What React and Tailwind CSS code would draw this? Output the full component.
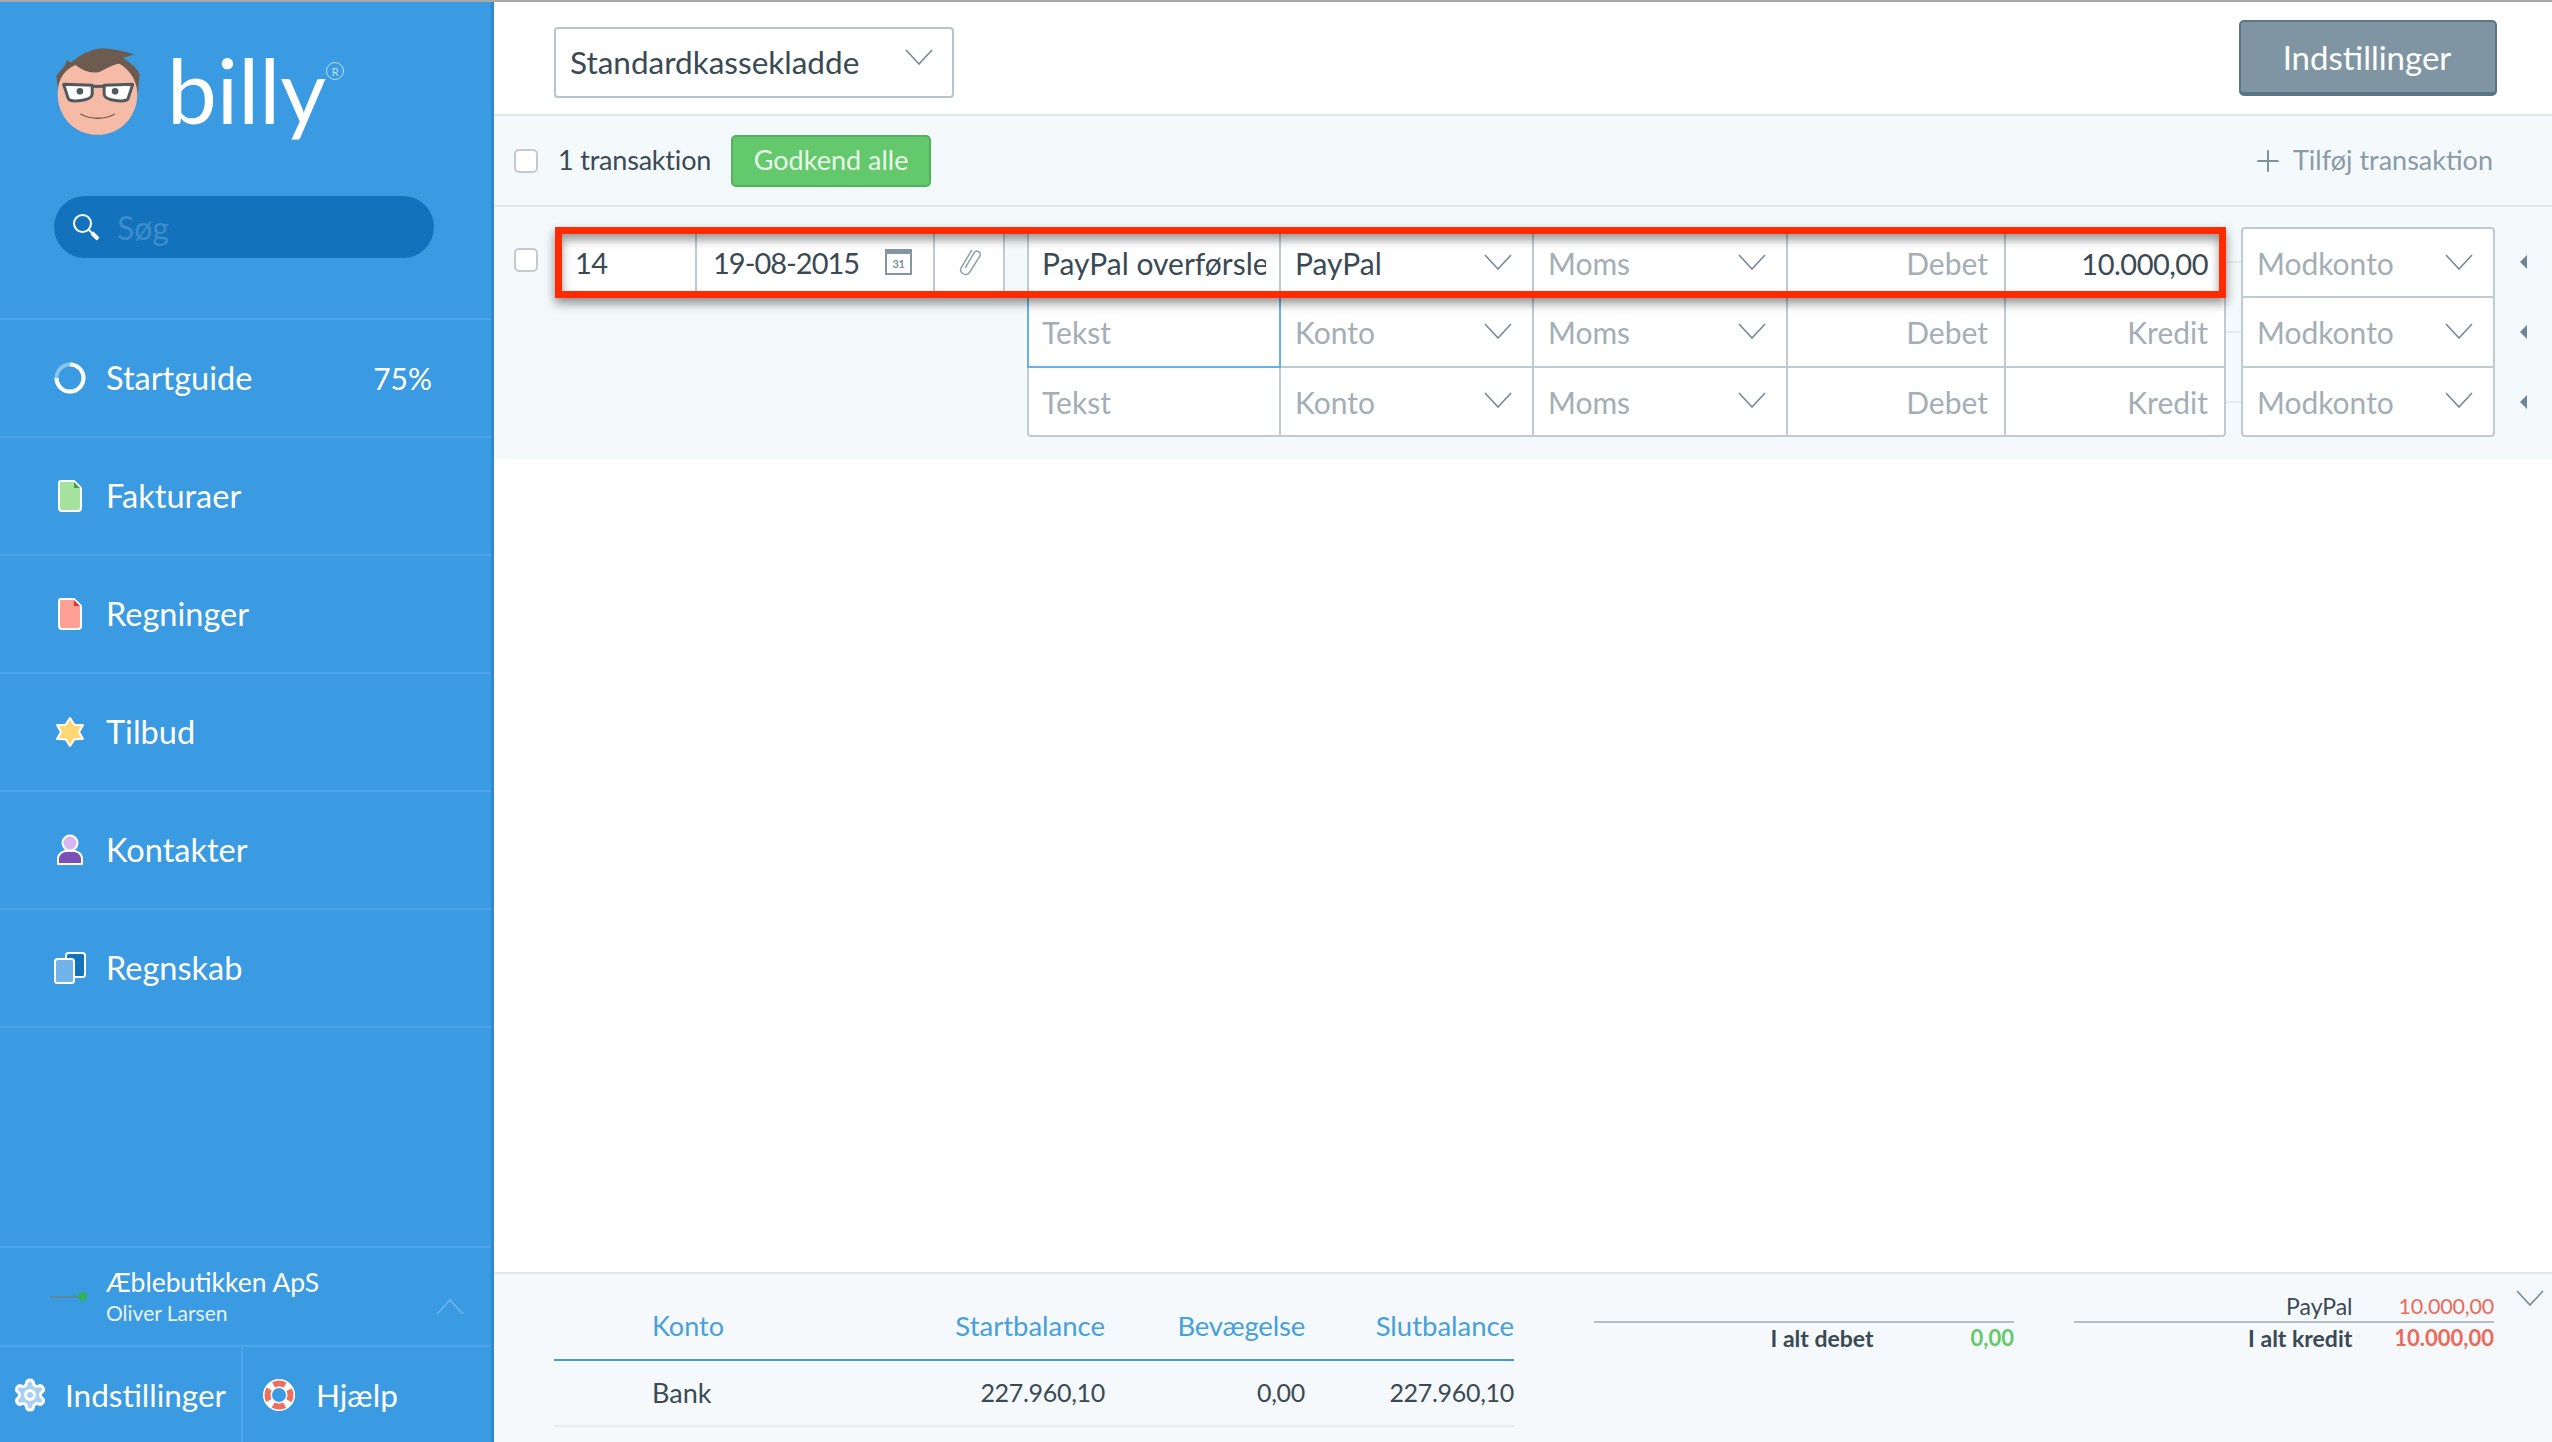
import { Settings, Plus } from 'lucide-react';

const ROW_LINE = 'border-[#bfcbd2]';
const NUMBER = 'text-[29px] tracking-[-0.5px]';

function Chevron({ up = false, color = '#75899a', className = '' }) {
  return (
    <svg viewBox="0 0 28 16" className={`w-[28px] h-[16px] ${className}`} fill="none">
      <polyline points={up ? '1,15 14,1 27,15' : '1,1 14,15 27,1'} stroke={color} strokeWidth="1.6" />
    </svg>
  );
}

function Face() {
  return (
    <svg viewBox="75 50 265 270" className="w-[88px] h-[90px] shrink-0">
      <path d="M82 135 L108 105 L114 88 L125 97 C150 75 190 52 225 54 C255 56 290 62 316 72 L284 82 C300 95 325 110 333 132 L326 200 L90 200 Z" fill="#6d5b4f" />
      <path d="M86 190 C86 145 110 115 140 104 C165 125 200 135 225 118 C240 110 262 100 272 100 C300 115 326 150 326 190 C326 260 275 314 206 314 C137 314 86 260 86 190 Z" fill="#f6bba6" />
      <path d="M104 162 L190 165 L190 192 C188 212 125 218 118 205 Z" fill="#fff" stroke="#50595c" strokeWidth="9" strokeLinejoin="round" />
      <path d="M312 162 L226 165 L226 192 C228 212 291 218 298 205 Z" fill="#fff" stroke="#50595c" strokeWidth="9" strokeLinejoin="round" />
      <path d="M188 168 L228 168" stroke="#50595c" strokeWidth="9" />
      <circle cx="153" cy="183" r="10" fill="#50595c" />
      <circle cx="259" cy="183" r="10" fill="#50595c" />
      <path d="M156 252 C185 268 228 268 257 252" fill="none" stroke="#6d5b4f" strokeWidth="4" strokeLinecap="round" />
    </svg>
  );
}

function ProgressRing() {
  return (
    <svg viewBox="0 0 32 32" className="w-[32px] h-[32px]" fill="none">
      <circle cx="16" cy="16" r="13.5" stroke="#8cc4ee" strokeWidth="4" />
      <path d="M16 2.5 A13.5 13.5 0 1 1 2.5 16" stroke="#fff" strokeWidth="4" />
    </svg>
  );
}

function DocIcon({ fill, fold }) {
  return (
    <svg viewBox="0 0 24 32" className="w-[24px] h-[32px]">
      <path d="M3 1 H16 L23 8 V28 Q23 31 20 31 H4 Q1 31 1 28 V3 Q1 1 3 1 Z" fill={fill} stroke="#fff" strokeWidth="2" />
      <path d="M16 2 L22 8 H16 Z" fill={fold} />
    </svg>
  );
}

function StarIcon() {
  return (
    <svg viewBox="0 0 30 32" className="w-[30px] h-[32px]">
      <path d="M15 2 L19.5 8.8 L28 9 L24 16 L28 23 L19.5 23.2 L15 30 L10.5 23.2 L2 23 L6 16 L2 9 L10.5 8.8 Z" fill="#ffd873" stroke="#fff" strokeWidth="2" strokeLinejoin="round" />
    </svg>
  );
}

function PersonIcon() {
  return (
    <svg viewBox="0 0 28 32" className="w-[28px] h-[32px]">
      <path d="M2 30 V25 Q2 19 9 17 H19 Q26 19 26 25 V30 Z" fill="#7b50b6" stroke="#fff" strokeWidth="2" strokeLinejoin="round" />
      <circle cx="14" cy="9" r="7.5" fill="#d6b6ee" stroke="#fff" strokeWidth="2" />
    </svg>
  );
}

function BooksIcon() {
  return (
    <svg viewBox="0 0 32 32" className="w-[32px] h-[32px]">
      <rect x="12" y="1" width="19" height="24" rx="2.5" fill="#1272bc" stroke="#fff" strokeWidth="2" />
      <rect x="1" y="7" width="19" height="24" rx="2.5" fill="#71b4ea" stroke="#fff" strokeWidth="2" />
    </svg>
  );
}

function SearchIcon() {
  return (
    <svg viewBox="0 0 28 28" className="w-[28px] h-[28px] shrink-0" fill="none">
      <circle cx="10.5" cy="10.5" r="8.5" stroke="#fff" strokeWidth="2" />
      <path d="M17 17 L26 26" stroke="#fff" strokeWidth="2" />
      <path d="M20 20 L26 26" stroke="#fff" strokeWidth="4" />
    </svg>
  );
}

function Lifebuoy() {
  return (
    <svg viewBox="0 0 32 32" className="w-[32px] h-[32px] shrink-0">
      <circle cx="16" cy="16" r="16" fill="#fff" />
      <circle cx="16" cy="16" r="11.5" fill="none" stroke="#ee6f5e" strokeWidth="6" strokeDasharray="12 6.06" strokeDashoffset="6" />
      <circle cx="16" cy="16" r="7" fill="#3a9ae2" />
    </svg>
  );
}

function PaperclipIcon() {
  return (
    <svg viewBox="0 0 26 28" className="w-[26px] h-[28px]" fill="none">
      <path d="M9.5 19.5 L18 5 C20 1.5 25.5 3.5 24 8 L13.5 24.5 C10.5 28.5 3 25.5 5 20 L15.5 2.5" stroke="#8fa2ae" strokeWidth="1.5" strokeLinecap="round" />
    </svg>
  );
}

function CalendarIcon() {
  return (
    <div className="w-[27px] h-[26px] border-2 border-t-[5px] border-[#8496a3] flex items-center justify-center text-[11px] leading-none text-[#7d909c] font-bold shrink-0">
      31
    </div>
  );
}

function Checkbox() {
  return <div className="w-[24px] h-[24px] rounded-[5px] border-2 border-[#c3c9cd] bg-white shrink-0" />;
}

function Select({ label, dark = false, width, last = false }) {
  return (
    <div className={`${width} h-full flex items-center justify-between pl-[14px] pr-[20px] ${last ? '' : `border-r-2 ${ROW_LINE}`} ${dark ? 'text-[#3a4a55]' : 'text-[#a3aeb5]'}`}>
      <span className="pt-[2px]">{label}</span>
      <Chevron className="-mt-[2px]" />
    </div>
  );
}

function AmountCell({ label, dark = false, width, last = false }) {
  return (
    <div className={`${width} h-full flex items-center justify-end pr-[16px] pt-[2px] ${last ? '' : `border-r-2 ${ROW_LINE}`} ${dark ? `text-[#3a4a55] ${NUMBER}` : 'text-[#a3aeb5]'}`}>
      {label}
    </div>
  );
}

const navItems = [
  { label: 'Fakturaer', icon: <DocIcon fill="#a5e29b" fold="#4c9a4c" /> },
  { label: 'Regninger', icon: <DocIcon fill="#ff9f95" fold="#d9362e" /> },
  { label: 'Tilbud', icon: <StarIcon /> },
  { label: 'Kontakter', icon: <PersonIcon /> },
  { label: 'Regnskab', icon: <BooksIcon /> },
];

function Sidebar() {
  return (
    <aside className="w-[494px] h-full shrink-0 bg-[#3a9ae2] border-r-[3px] border-[#3488cc] flex flex-col text-white">
      {/* Logo and search */}
      <div className="h-[318px] shrink-0 border-b-2 border-[#4ba5e8] pl-[54px]">
        <div className="flex items-start pt-[45px] h-[194px]">
          <Face />
          <span className="ml-[25px] -mt-[10px] text-[89px] leading-[106px] font-normal">billy</span>
          <span className="ml-[0px] mt-[15px] w-[18px] h-[18px] rounded-full border border-[#bfe0f8] text-[11px] leading-none text-[#bfe0f8] flex items-center justify-center">R</span>
        </div>
        <div className="w-[380px] h-[62px] rounded-full bg-[#1272bc] flex items-center pl-[18px] gap-[17px]">
          <SearchIcon />
          <span className="text-[32px] pt-[2px] text-[#3f8ccb]">Søg</span>
        </div>
      </div>

      {/* Nav */}
      <div className="h-[118px] shrink-0 border-b-2 border-[#4ba5e8] flex items-center text-[32.5px]">
        <div className="w-[106px] pl-[54px] flex"><ProgressRing /></div>
        <span className="flex-1">Startguide</span>
        <span className="pr-[59px] text-[30px]">75%</span>
      </div>
      {navItems.map((item) => (
        <div key={item.label} className="h-[118px] shrink-0 border-b-2 border-[#4ba5e8] flex items-center text-[32.5px]">
          <div className="w-[106px] pl-[54px] flex">
            <div className="w-[32px] flex justify-center">{item.icon}</div>
          </div>
          <span>{item.label}</span>
        </div>
      ))}

      <div className="flex-1" />

      {/* Company */}
      <div className="h-[99px] shrink-0 border-t-2 border-[#4ba5e8] flex items-center">
        <div className="w-[106px] pl-[50px] flex items-center">
          <div className="w-[28px] h-[2px] bg-[#5c8a9c]" />
          <div className="w-[9px] h-[9px] rounded-full bg-[#2fb35a]" />
        </div>
        <div className="flex-1 flex flex-col">
          <span className="text-[26.5px] leading-[34px] -mt-[2px]">Æblebutikken ApS</span>
          <span className="text-[21px] leading-[28px] text-[#e6f3fc]">Oliver Larsen</span>
        </div>
        <Chevron up color="#6db4ea" className="mr-[27px] mt-[20px] w-[26px]" />
      </div>

      {/* Bottom links */}
      <div className="h-[97px] shrink-0 border-t-2 border-[#4ba5e8] flex items-stretch text-[31.5px]">
        <div className="w-[243px] border-r-2 border-[#4ba5e8] flex items-center pl-[12px] gap-[17px]">
          <Settings size={36} strokeWidth={2} color="#fff" fill="#a9d0f0" className="shrink-0" />
          <span className="pt-[2px]">Indstillinger</span>
        </div>
        <div className="flex-1 flex items-center pl-[20px] gap-[21px]">
          <Lifebuoy />
          <span className="pt-[2px]">Hjælp</span>
        </div>
      </div>
    </aside>
  );
}

function TransactionRows() {
  const rows = [
    { text: 'PayPal overførsler', konto: 'PayPal', kredit: '10.000,00', filled: true },
    { text: 'Tekst', konto: 'Konto', kredit: 'Kredit', focus: true },
    { text: 'Tekst', konto: 'Konto', kredit: 'Kredit' },
  ];

  return (
    <div className="relative h-[252px] shrink-0 bg-[#f4f9fc] pt-[20px] pl-[20px] flex items-start text-[30px]">
      <div className="w-[41px] pt-[21px]"><Checkbox /></div>

      {/* Number, date, attachment */}
      <div className={`w-[450px] h-[70px] mr-[22px] bg-white flex text-[#3a4a55] shrink-0 ${NUMBER}`}>
        <div className={`w-[142px] flex items-center pl-[20px] pt-[2px] border-r-2 ${ROW_LINE}`}>14</div>
        <div className={`w-[238px] flex items-center justify-between pl-[16px] pr-[21px] border-r-2 ${ROW_LINE}`}>
          <span className="pt-[2px] tracking-[-1px]">19-08-2015</span>
          <CalendarIcon />
        </div>
        <div className={`flex-1 flex items-center justify-center border-r-2 ${ROW_LINE}`}>
          <PaperclipIcon />
        </div>
      </div>

      {/* Entry table */}
      <div className={`w-[1199px] h-[210px] shrink-0 bg-white border-2 ${ROW_LINE} rounded-[4px] flex flex-col`}>
        {rows.map((row, i) => (
          <div key={i} className={`flex-1 flex items-stretch ${i < 2 ? `border-b-2 ${ROW_LINE}` : ''}`}>
            <div className={`flex items-center pl-[13px] pr-[13px] whitespace-nowrap ${row.filled ? 'text-[#3a4a55]' : 'text-[#a3aeb5]'} ${row.focus ? 'w-[254px] border-2 border-t-0 border-[#6ab0e8] -mb-[2px] -ml-[2px]' : `w-[252px] border-r-2 ${ROW_LINE}`}`}>
              <span className="block w-full overflow-hidden pt-[2px]">{row.text}</span>
            </div>
            <Select label={row.konto} dark={row.filled} width="w-[253px]" />
            <Select label="Moms" width="w-[254px]" />
            <AmountCell label="Debet" width="w-[218px]" />
            <AmountCell label={row.kredit} dark={row.filled} width="flex-1" last />
          </div>
        ))}
      </div>

      {/* Connector lines */}
      <div className="w-[15px] h-[210px] shrink-0 flex flex-col">
        {rows.map((_, i) => (
          <div key={i} className="flex-1 flex items-center"><div className="w-full h-[2px] bg-[#e4ebef]" /></div>
        ))}
      </div>

      {/* Contra account */}
      <div className={`w-[254px] h-[210px] shrink-0 bg-white border-2 ${ROW_LINE} rounded-[4px] flex flex-col`}>
        {rows.map((_, i) => (
          <div key={i} className={`flex-1 flex items-center justify-between pl-[14px] pr-[20px] text-[#a3aeb5] ${i < 2 ? `border-b-2 ${ROW_LINE}` : ''}`}>
            <span className="pt-[2px]">Modkonto</span>
            <Chevron className="-mt-[2px]" />
          </div>
        ))}
      </div>

      {/* Row arrows */}
      <div className="h-[210px] pl-[25px] flex flex-col">
        {rows.map((_, i) => (
          <div key={i} className="flex-1 flex items-center">
            <div className="w-0 h-0 border-y-[7px] border-y-transparent border-r-[7px] border-r-[#6d8594]" />
          </div>
        ))}
      </div>

      {/* Red annotation around the first row */}
      <div className="absolute left-[61px] top-[20px] w-[1671px] h-[71px] border-[7px] border-[#ff2a00] shadow-[0_5px_10px_rgba(0,0,0,0.45),inset_0_6px_10px_rgba(0,0,0,0.4)] pointer-events-none" />
    </div>
  );
}

function Footer() {
  return (
    <div className="h-[170px] shrink-0 border-t-2 border-[#e3e6e8] bg-[#f6f9fb] flex items-start text-[#3a4a55]">
      {/* Balance table */}
      <div className="w-[960px] ml-[60px] shrink-0">
        <div className="grid grid-cols-[350px_201px_200px_209px] h-[87px] items-end pb-[15px] border-b-2 border-[#3f9bdc] text-[#46a0dc] text-[27.5px] leading-[36px]">
          <span className="pl-[98px] text-[27px]">Konto</span>
          <span className="text-right">Startbalance</span>
          <span className="text-right tracking-[-0.2px]">Bevægelse</span>
          <span className="text-right">Slutbalance</span>
        </div>
        <div className="grid grid-cols-[350px_201px_200px_209px] h-[66px] items-center border-b-2 border-[#e8edf0] text-[25px] tracking-[-0.3px]">
          <span className="pl-[98px] text-[27px] tracking-normal">Bank</span>
          <span className="text-right">227.960,10</span>
          <span className="text-right">0,00</span>
          <span className="text-right">227.960,10</span>
        </div>
      </div>

      {/* Debit total */}
      <div className="w-[420px] ml-[80px] mt-[47px] shrink-0 border-t-2 border-[#b2bec4] flex justify-end text-[23px] leading-[30px] font-bold">
        <span className="mr-[97px]">I alt debet</span>
        <span className="text-[22px] text-[#63c96b]">0,00</span>
      </div>

      {/* Credit total */}
      <div className="w-[420px] ml-[60px] mt-[18px] shrink-0 flex flex-col text-[23px]">
        <div className="flex justify-end pb-[1px] leading-[28px]">
          <span className="mr-[46px]">PayPal</span>
          <span className="text-[21.5px] text-[#ec6a5c] tracking-[-0.2px]">10.000,00</span>
        </div>
        <div className="border-t-2 border-[#b2bec4] flex justify-end font-bold leading-[30px]">
          <span className="mr-[42px]">I alt kredit</span>
          <span className="text-[22px] text-[#ec6a5c]">10.000,00</span>
        </div>
      </div>

      <Chevron className="ml-[22px] mt-[16px]" />
    </div>
  );
}

export default function App() {
  return (
    <div className="w-[2552px] h-[1442px] border-t-2 border-[#a9a9a9] flex overflow-hidden bg-white font-[Lato,sans-serif]">
      <Sidebar />
      <main className="flex-1 flex flex-col min-w-0">
        {/* Header */}
        <div className="h-[114px] shrink-0 border-b-2 border-[#e3e6e8] flex items-start justify-between pl-[60px] pr-[55px] pt-[18px]">
          <div className="w-[400px] h-[71px] mt-[7px] rounded-[4px] border-2 border-[#b8c4cb] flex items-center justify-between pl-[14px] pr-[19px] text-[31.5px] text-[#3a4a55]">
            <span>Standardkassekladde</span>
            <Chevron className="-mt-[12px]" />
          </div>
          <div className="w-[258px] h-[76px] rounded-[5px] bg-[#7f95a3] border-2 border-b-4 border-[#5b7486] flex items-center justify-center pt-[2px] pr-[2px] text-[33px] text-white">
            Indstillinger
          </div>
        </div>

        {/* Toolbar */}
        <div className="h-[91px] shrink-0 bg-[#f4f9fc] border-b-2 border-[#e3e6e8] flex items-center pl-[20px] pr-[59px] text-[27px] text-[#3a4a55]">
          <Checkbox />
          <span className="ml-[20px] tracking-[-0.2px]">1 transaktion</span>
          <div className="ml-[20px] w-[200px] h-[52px] rounded-[5px] bg-[#64c96c] border-2 border-[#52b25a] flex items-center justify-center text-[#e8f8ea]">
            Godkend alle
          </div>
          <div className="ml-auto flex items-center gap-[8px] text-[#8a9ba6]">
            <Plus size={34} strokeWidth={1.4} color="#7f929e" />
            <span>Tilføj transaktion</span>
          </div>
        </div>

        <TransactionRows />
        <div className="flex-1" />
        <Footer />
      </main>
    </div>
  );
}
